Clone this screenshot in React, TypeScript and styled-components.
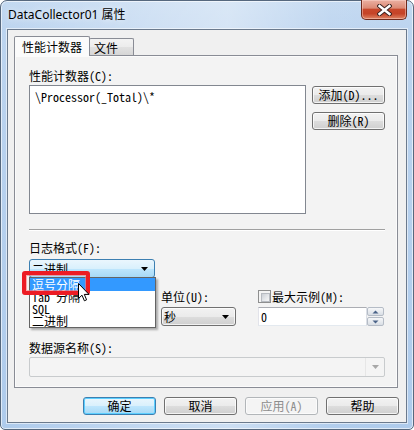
import React from "react";
import styled, { createGlobalStyle, css } from "styled-components";

const SIM = `"Noto Sans Mono CJK SC", "Noto Sans CJK SC", "Noto Sans", sans-serif`;

const GlobalStyle = createGlobalStyle`
  html, body { margin: 0; padding: 0; background: #ffffff; }
  body { font-family: ${SIM}; font-size: 12px; color: #000; }
  * { box-sizing: border-box; }
`;

const Window = styled.div`
  position: relative;
  width: 414px;
  height: 430px;
  border: 1px solid #56687e;
  border-radius: 7px 7px 5px 5px;
  padding: 0 6px 6px 6px;
  display: flex;
  flex-direction: column;
  background:
    linear-gradient(90deg, rgba(255,255,255,0) 0%, rgba(255,255,255,0.28) 38%, rgba(255,255,255,0.38) 55%, rgba(255,255,255,0.05) 80%, rgba(255,255,255,0) 100%),
    linear-gradient(180deg, #c3d9f1 0%, #bcd4ef 30px, #aecbec 100%);
  box-shadow: inset 0 0 0 1px rgba(255, 255, 255, 0.6);
`;

const TitleBar = styled.div`
  height: 28px;
  display: flex;
  justify-content: space-between;
  align-items: flex-start;
  flex-shrink: 0;
`;

const Title = styled.div`
  margin-top: 6px;
  padding-left: 1px;
  font-family: "Noto Sans", "Noto Sans CJK SC", sans-serif;
  font-size: 12px;
  line-height: 16px;
  color: #000;
  text-shadow: 0 0 6px rgba(255, 255, 255, 0.9);
`;

const CloseButton = styled.div`
  width: 46px;
  height: 20px;
  margin-top: -1px;
  border: 1px solid #6e2a1d;
  border-top: none;
  border-radius: 0 0 5px 5px;
  display: flex;
  align-items: center;
  justify-content: center;
  background: linear-gradient(180deg, #ebb0a2 0%, #dc8a75 42%, #c8472b 50%, #c54428 72%, #df8565 100%);
  box-shadow: inset 0 0 0 1px rgba(255, 220, 210, 0.45);
`;

const Client = styled.div`
  flex: 1;
  border: 1px solid #6b7a8d;
  background: #f0f0f0;
  padding: 6px 7px 0 6px;
  display: flex;
  flex-direction: column;
  box-shadow: 0 0 0 1px rgba(255, 255, 255, 0.55);
`;

const TabStrip = styled.div`
  height: 19px;
  display: flex;
  align-items: flex-end;
  flex-shrink: 0;
`;

const Tab = styled.div<{ $selected?: boolean; $width: number }>`
  width: ${(p) => p.$width}px;
  border: 1px solid #898c95;
  border-bottom: none;
  font-size: 12px;
  white-space: nowrap;
  ${(p) =>
    p.$selected
      ? css`
          height: 20px;
          margin-bottom: -1px;
          position: relative;
          z-index: 1;
          background: #fbfbfb;
          padding: 2px 0 0 7px;
          line-height: 16px;
          border-radius: 2px 2px 0 0;
        `
      : css`
          height: 17px;
          margin-left: -1px;
          background: linear-gradient(180deg, #f3f3f3 0%, #ececec 50%, #e1e1e1 51%, #d6d6d6 100%);
          padding: 1px 0 0 4px;
          line-height: 16px;
          border-radius: 2px 2px 0 0;
        `}
`;

const Panel = styled.div`
  width: 384px;
  height: 333px;
  flex-shrink: 0;
  border: 1px solid #898c95;
  background: #f3f3f3;
  box-shadow: inset 0 0 0 1px #fbfbfb;
  padding: 12px 12px 0 14px;
  display: flex;
  flex-direction: column;
`;

const CounterGrid = styled.div`
  display: grid;
  grid-template-columns: 277px 73px;
  grid-template-rows: 17px 129px;
  column-gap: 6px;
`;

const Label = styled.div<{ $mt?: number }>`
  margin-top: ${(p) => p.$mt ?? 0}px;
  height: 15px;
  line-height: 15px;
  font-size: 12px;
  white-space: nowrap;
`;

const ListBox = styled.div`
  grid-column: 1;
  grid-row: 2;
  border: 1px solid #828790;
  background: #ffffff;
  padding: 3px 5px;
  line-height: 16px;
  font-size: 12px;
`;

const ButtonColumn = styled.div`
  grid-column: 2;
  grid-row: 2;
  display: flex;
  flex-direction: column;
  gap: 8px;
  padding-top: 1px;
`;

const Button = styled.div<{ $kind?: "normal" | "default" | "disabled" }>`
  width: 73px;
  height: 18px;
  border-radius: 3px;
  font-size: 12px;
  line-height: 16px;
  text-align: center;
  white-space: nowrap;
  ${(p) =>
    p.$kind === "default"
      ? css`
          border: 1px solid #3c7fb1;
          background: linear-gradient(180deg, #eaf6fd 0%, #d9f0fc 50%, #bee6fd 51%, #a7d9f5 100%);
          box-shadow: inset 0 0 0 1px #5ccfff;
          color: #000;
        `
      : p.$kind === "disabled"
      ? css`
          border: 1px solid #b2b6b9;
          background: #f4f4f4;
          box-shadow: inset 0 0 0 1px #fbfbfb;
          color: #8d8d8d;
        `
      : css`
          border: 1px solid #707070;
          background: linear-gradient(180deg, #f2f2f2 0%, #ebebeb 50%, #dddddd 51%, #cfcfcf 100%);
          box-shadow: inset 0 0 0 1px rgba(255, 255, 255, 0.75);
          color: #000;
        `}
`;

const Separator = styled.div`
  margin-top: 15px;
  height: 2px;
  border-top: 1px solid #a0a0a0;
  border-bottom: 1px solid #ffffff;
  flex-shrink: 0;
`;

const FormatField = styled.div`
  position: relative;
  width: 126px;
  height: 19px;
  margin-top: 4px;
`;

const Combo = styled.div<{ $kind?: "normal" | "hot" | "disabled"; $width?: string }>`
  width: ${(p) => p.$width ?? "100%"};
  height: 19px;
  border-radius: 3px;
  display: flex;
  align-items: center;
  justify-content: space-between;
  padding: 0 6px 0 2px;
  font-size: 12px;
  line-height: 16px;
  ${(p) =>
    p.$kind === "hot"
      ? css`
          border: 1px solid #3c7fb1;
          background: linear-gradient(180deg, #eaf6fd 0%, #d9f0fc 50%, #bee6fd 51%, #a7d9f5 100%);
        `
      : p.$kind === "disabled"
      ? css`
          height: 20px;
          border-radius: 2px;
          border: 1px solid #c8cbcd;
          background: #f4f4f4;
          padding: 0;
          justify-content: flex-end;
        `
      : css`
          border: 1px solid #707070;
          background: linear-gradient(180deg, #f2f2f2 0%, #ebebeb 50%, #dddddd 51%, #cfcfcf 100%);
          box-shadow: inset 0 0 0 1px rgba(255, 255, 255, 0.7);
        `}
`;

const DisabledArrowCell = styled.div`
  width: 19px;
  height: 100%;
  border-left: 1px solid #e6e6e6;
  display: flex;
  align-items: center;
  justify-content: center;
`;

const DropList = styled.div`
  position: absolute;
  top: 18px;
  left: 0;
  width: 127px;
  height: 51px;
  border: 1px solid #646464;
  background: #ffffff;
  box-shadow: 2px 2px 2px rgba(0, 0, 0, 0.3);
  z-index: 5;
  display: flex;
  flex-direction: column;
`;

const DropItem = styled.div<{ $selected?: boolean }>`
  height: 12px;
  line-height: 12px;
  padding-left: 2px;
  font-size: 12px;
  white-space: nowrap;
  overflow: visible;
  &:first-child {
    height: 13px;
    line-height: 13px;
  }
  ${(p) =>
    p.$selected &&
    css`
      background: #3399ff;
      color: #ffffff;
    `}
`;

const Highlight = styled.div`
  position: absolute;
  left: -7px;
  top: 12px;
  width: 68px;
  height: 24px;
  border: 4px solid #ec1c24;
  border-radius: 3px;
  box-shadow: inset 0 0 0 1px rgba(255, 120, 120, 0.6);
  z-index: 6;
`;

const Cursor = styled.svg`
  position: absolute;
  left: 49px;
  top: 24px;
  z-index: 7;
`;

const OptionsRow = styled.div`
  margin-top: 10px;
  padding-left: 132px;
  display: grid;
  grid-template-columns: 75px 126px;
  column-gap: 22px;
`;

const Field = styled.div`
  display: flex;
  flex-direction: column;
  gap: 2px;
`;

const FieldHeader = styled.div`
  height: 17px;
  display: flex;
  align-items: center;
  gap: 1px;
  white-space: nowrap;
  font-size: 12px;
`;

const Checkbox = styled.div`
  width: 13px;
  height: 13px;
  border: 1px solid #8e8f8f;
  background: #f4f4f4;
  padding: 2px;
  flex-shrink: 0;
  &::after {
    content: "";
    display: block;
    width: 7px;
    height: 7px;
    background: linear-gradient(135deg, #cbcfd5 0%, #e7e9ec 60%, #f6f6f6 100%);
    border: 1px solid #b7bbc1;
  }
`;

const SpinField = styled.div`
  height: 19px;
  display: flex;
`;

const NumberBox = styled.div`
  flex: 1;
  border: 1px solid #abadb3;
  border-left-color: #e2e3ea;
  border-bottom-color: #e3e9ef;
  border-right-color: #dbdfe6;
  background: #ffffff;
  padding-left: 2px;
  line-height: 17px;
  font-size: 12px;
`;

const Spin = styled.div`
  width: 17px;
  display: flex;
  flex-direction: column;
  gap: 1px;
`;

const SpinButton = styled.div`
  height: 9px;
  border: 1px solid #b5bcc6;
  border-radius: 2px;
  background: linear-gradient(180deg, #f6f7f9 0%, #e8ebef 50%, #d9dee5 100%);
  display: flex;
  align-items: center;
  justify-content: center;
`;

const ButtonRow = styled.div`
  margin-top: 9px;
  display: flex;
  justify-content: flex-end;
  gap: 8px;
`;

const Arrow = ({ color = "#000" }: { color?: string }) => (
  <svg width="7" height="4" viewBox="0 0 7 4">
    <path d="M0 0 H7 L3.5 4 Z" fill={color} />
  </svg>
);

const SpinArrow = ({ up }: { up?: boolean }) => (
  <svg width="7" height="4" viewBox="0 0 7 4">
    <path d={up ? "M0.5 3.5 H6.5 L3.5 0.5 Z" : "M0.5 0.5 H6.5 L3.5 3.5 Z"} fill="#4a6388" />
  </svg>
);

export default function App() {
  return (
    <>
      <GlobalStyle />
      <Window>
        <TitleBar>
          <Title>DataCollector01 属性</Title>
          <CloseButton>
            <svg width="15" height="12" viewBox="0 0 15 12">
              <path d="M2.5 2 L12.5 10 M12.5 2 L2.5 10" stroke="#3b2320" strokeWidth="4.4" strokeLinecap="square" />
              <path d="M2.5 2 L12.5 10 M12.5 2 L2.5 10" stroke="#ffffff" strokeWidth="2.4" strokeLinecap="square" />
            </svg>
          </CloseButton>
        </TitleBar>
        <Client>
          <TabStrip>
            <Tab $selected $width={76}>性能计数器</Tab>
            <Tab $width={45}>文件</Tab>
          </TabStrip>
          <Panel>
            <CounterGrid>
              <Label>性能计数器(C):</Label>
              <ListBox>\Processor(_Total)\*</ListBox>
              <ButtonColumn>
                <Button>添加(D)...</Button>
                <Button>删除(R)</Button>
              </ButtonColumn>
            </CounterGrid>
            <Separator />
            <Label $mt={9}>日志格式(F):</Label>
            <FormatField>
              <Combo $kind="hot">
                <span>二进制</span>
                <Arrow />
              </Combo>
              <DropList>
                <DropItem $selected>逗号分隔</DropItem>
                <DropItem>Tab 分隔</DropItem>
                <DropItem>SQL</DropItem>
                <DropItem>二进制</DropItem>
              </DropList>
              <Highlight />
              <Cursor width="12" height="19" viewBox="0 0 12 19">
                <path
                  d="M0.5 0.5 L0.5 15.5 L4 12.2 L6.4 17.8 L8.6 16.8 L6.3 11.4 L11 11.4 Z"
                  fill="#ffffff"
                  stroke="#000000"
                  strokeWidth="1"
                  strokeLinejoin="miter"
                />
              </Cursor>
            </FormatField>
            <OptionsRow>
              <Field>
                <FieldHeader>单位(U):</FieldHeader>
                <Combo $width="75px">
                  <span>秒</span>
                  <Arrow />
                </Combo>
              </Field>
              <Field>
                <FieldHeader>
                  <Checkbox />
                  <span>最大示例(M):</span>
                </FieldHeader>
                <SpinField>
                  <NumberBox>0</NumberBox>
                  <Spin>
                    <SpinButton>
                      <SpinArrow up />
                    </SpinButton>
                    <SpinButton>
                      <SpinArrow />
                    </SpinButton>
                  </Spin>
                </SpinField>
              </Field>
            </OptionsRow>
            <Label $mt={14}>数据源名称(S):</Label>
            <Combo $kind="disabled" style={{ marginTop: 2 }}>
              <DisabledArrowCell>
                <Arrow color="#a7a7a7" />
              </DisabledArrowCell>
            </Combo>
          </Panel>
          <ButtonRow>
            <Button $kind="default">确定</Button>
            <Button>取消</Button>
            <Button $kind="disabled">应用(A)</Button>
            <Button>帮助</Button>
          </ButtonRow>
        </Client>
      </Window>
    </>
  );
}
